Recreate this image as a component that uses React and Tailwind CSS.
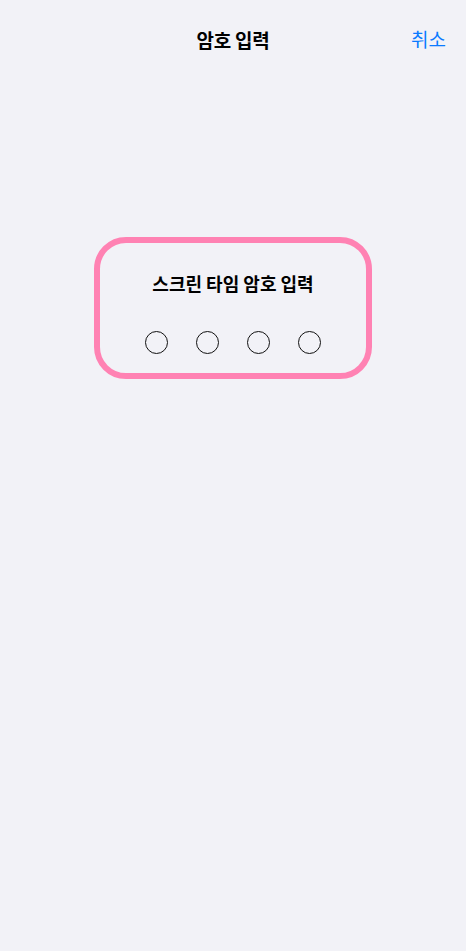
export default function App() {
  const font = { fontFamily: '"Noto Sans CJK KR", "Noto Sans", sans-serif' };
  return (
    <div className="w-[466px] h-[951px] bg-[#f2f2f7] flex flex-col" style={font}>
      <div className="relative h-[80px] flex items-center justify-center">
        <span className="text-[19px] font-semibold text-black tracking-[-0.2px]">암호 입력</span>
        <span className="absolute right-[20px] top-[25px] text-[19px] text-[#0a7aff]">취소</span>
      </div>
      <div className="flex justify-center mt-[157px]">
        <div className="w-[278px] h-[142px] rounded-[32px] border-[6px] border-[#ff82b3] flex flex-col items-center">
          <div className="mt-[28px] text-[18px] font-semibold text-black tracking-[0px] leading-[24px]">스크린 타임 암호 입력</div>
          <div className="mt-[36px] flex gap-[28px]">
            {[0, 1, 2, 3].map((i) => (
              <div key={i} className="w-[23px] h-[23px] rounded-full border-[1.6px] border-[#111]" />
            ))}
          </div>
        </div>
      </div>
    </div>
  );
}
